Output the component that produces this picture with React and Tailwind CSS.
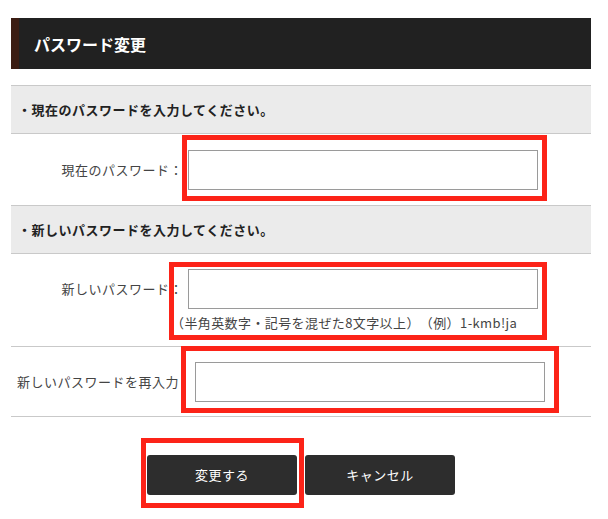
import React from 'react';

const Annot = ({ className }) => (
    <div className={`absolute border-[5px] border-[#fc2318] pointer-events-none ${className}`} />
);

const SectionHead = ({ children }) => (
    <div className="h-[48px] border-t border-[#c9c9c9] bg-[#ebebeb] flex items-center pl-[7px] text-[13px] font-bold tracking-[0.5px] text-[#222]">
        {children}
    </div>
);

const Field = ({ className }) => (
    <input type="password" className={`w-[350px] h-[40px] border border-[#9a9a9a] bg-white outline-none ${className}`} />
);

const App = () => {
    return (
        <div className="min-h-screen bg-white pt-[18px] [text-spacing-trim:space-all] font-['Noto_Sans_CJK_JP','Noto_Sans',sans-serif]">
            <div className="ml-[11px] w-[580px]">
                <div className="h-[51px] bg-[#212121] border-l-[8px] border-[#3b1d13] flex items-center pl-[15px]">
                    <h1 className="text-white text-[16px] font-bold leading-none">パスワード変更</h1>
                </div>

                <div className="mt-[16px]">
                    <SectionHead>・現在のパスワードを入力してください。</SectionHead>

                    <div className="relative h-[72px] border-t border-[#c9c9c9] flex items-center">
                        <label className="w-[172px] text-right text-[13px] tracking-[0.5px] text-[#444] whitespace-nowrap">現在のパスワード：</label>
                        <Field className="ml-[5px]" />
                        <Annot className="left-[171px] top-[1px] w-[365px] h-[66px]" />
                    </div>

                    <SectionHead>・新しいパスワードを入力してください。</SectionHead>

                    <div className="relative h-[93px] border-t border-[#c9c9c9] flex items-start pt-[15px]">
                        <label className="w-[172px] leading-[40px] text-right text-[13px] tracking-[0.5px] text-[#444] whitespace-nowrap">新しいパスワード：</label>
                        <div className="ml-[5px] flex flex-col">
                            <Field />
                            <p className="-ml-[17px] mt-[6px] text-[13px] leading-[16px] tracking-[0.4px] text-[#444] whitespace-nowrap">
                                （半角英数字・記号を混ぜた8文字以上）（例）1-kmb!ja
                            </p>
                        </div>
                        <Annot className="left-[158px] top-[8px] w-[378px] h-[78px]" />
                    </div>

                    <div className="relative h-[71px] border-t border-b border-[#c9c9c9] flex items-center">
                        <label className="w-[168px] text-right text-[13px] tracking-[0.5px] text-[#444] whitespace-nowrap">新しいパスワードを再入力</label>
                        <Field className="ml-[16px]" />
                        <Annot className="left-[170px] -top-[1px] w-[378px] h-[67px]" />
                    </div>
                </div>

                <div className="relative mt-[38px] flex justify-center gap-[8px]">
                    <button className="w-[150px] h-[40px] rounded-[3px] bg-[#2d2d2d] text-white text-[13px] tracking-[0.5px]">変更する</button>
                    <button className="w-[150px] h-[40px] rounded-[3px] bg-[#2d2d2d] text-white text-[13px] tracking-[0.5px]">キャンセル</button>
                    <Annot className="left-[130px] -top-[17px] w-[163px] h-[70px]" />
                </div>
            </div>
        </div>
    );
};

export default App;
